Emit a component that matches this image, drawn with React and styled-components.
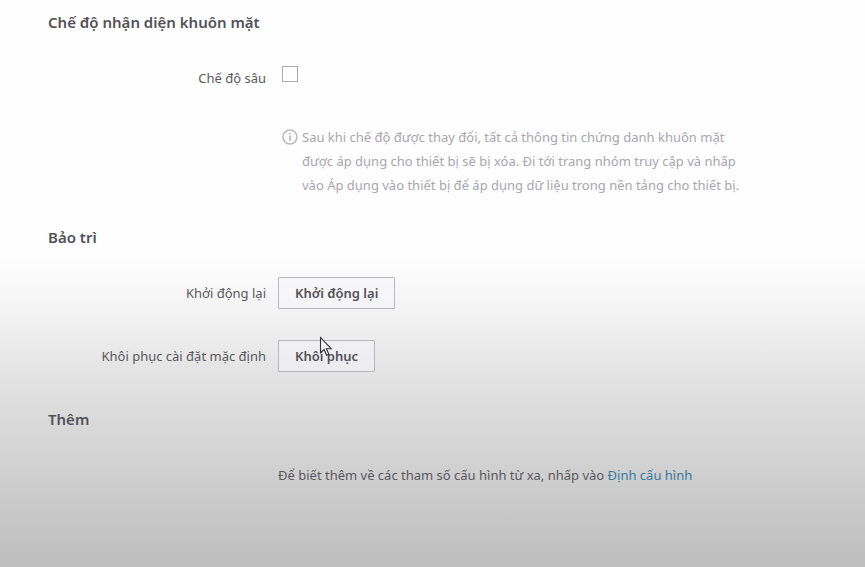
import React from "react";
import styled, { createGlobalStyle } from "styled-components";

const GlobalStyle = createGlobalStyle`
  * { box-sizing: border-box; }
  body {
    margin: 0;
    font: 13px/24px "Noto Sans", sans-serif;
    color: #5a585e;
  }
`;

const Page = styled.main`
  position: relative;
  min-height: 100vh;
  padding: 10px 48px 0;
  background: linear-gradient(#fefefe 45%, #f3f3f3 55%, #e2e2e2 67%, #cfcfcf 84%, #bfbfbf 98%);
`;

const Section = styled.section`
  margin-bottom: ${(p) => p.$gap}px;
`;

const Heading = styled.h2`
  margin: 0 0 28px;
  font-size: 15px;
  line-height: 24px;
  font-weight: 600;
  color: #535158;
`;

const Row = styled.div`
  display: grid;
  grid-template-columns: 218px 1fr;
  column-gap: 12px;
  align-items: center;
  min-height: 32px;
  & + & { margin-top: 31px; }
`;

const Label = styled.label`
  text-align: right;
`;

const Checkbox = styled.input`
  appearance: none;
  width: 16px;
  height: 16px;
  margin: 0 0 8px 4px;
  background: #fff;
  border: 1px solid #acaab0;
  &:checked { background: #3a789f; }
`;

const Hint = styled.div`
  grid-column: 2;
  display: flex;
  gap: 4px;
  padding-left: 4px;
  color: #a9a6ad;
`;

const HintText = styled.p`
  margin: 0;
  max-width: 450px;
`;

const InfoIcon = styled.svg`
  flex: none;
  margin-top: 4px;
  fill: none;
  stroke: #bcbabf;
`;

const Button = styled.button`
  height: 32px;
  padding: 0 16px;
  font: 600 13px/24px "Noto Sans", sans-serif;
  color: #535158;
  background: rgba(246, 243, 248, 0.45);
  border: 1px solid #b9b7bc;
  border-radius: 1px;
`;

const More = styled.p`
  grid-column: 2;
  margin: 0;
`;

const Link = styled.a`
  color: #3a789f;
  text-decoration: none;
`;

const Cursor = styled.svg`
  position: absolute;
  left: 319px;
  top: 336px;
  pointer-events: none;
`;

export default function App() {
  return (
    <>
      <GlobalStyle />
      <Page>
        <Section $gap={28}>
          <Heading>Chế độ nhận diện khuôn mặt</Heading>
          <Row>
            <Label htmlFor="deep">Chế độ sâu</Label>
            <Checkbox id="deep" type="checkbox" />
          </Row>
          <Row>
            <Hint>
              <InfoIcon width="16" height="16" viewBox="0 0 16 16" aria-hidden="true">
                <circle cx="8" cy="8" r="7" strokeWidth="1.6" />
                <path d="M8 6.8v5M8 4v1.6" strokeWidth="1.8" />
              </InfoIcon>
              <HintText>
                Sau khi chế độ được thay đổi, tất cả thông tin chứng danh khuôn mặt
                được áp dụng cho thiết bị sẽ bị xóa. Đi tới trang nhóm truy cập và nhấp
                vào Áp dụng vào thiết bị để áp dụng dữ liệu trong nền tảng cho thiết bị.
              </HintText>
            </Hint>
          </Row>
        </Section>
        <Section $gap={35}>
          <Heading>Bảo trì</Heading>
          <Row>
            <Label htmlFor="restart">Khởi động lại</Label>
            <div><Button id="restart" type="button">Khởi động lại</Button></div>
          </Row>
          <Row>
            <Label htmlFor="restore">Khôi phục cài đặt mặc định</Label>
            <div><Button id="restore" type="button">Khôi phục</Button></div>
          </Row>
        </Section>
        <Section $gap={0}>
          <Heading>Thêm</Heading>
          <Row>
            <More>Để biết thêm về các tham số cấu hình từ xa, nhấp vào <Link href="#config">Định cấu hình</Link></More>
          </Row>
        </Section>
        <Cursor width="14" height="22" viewBox="0 0 14 22" aria-hidden="true">
          <path d="M1.5 1.5v15.2l3.6-3.2 2.5 5.8 2.3-1-2.5-5.6h4.8z" fill="#f4f2f5" stroke="#333" strokeWidth="1.1" />
        </Cursor>
      </Page>
    </>
  );
}
